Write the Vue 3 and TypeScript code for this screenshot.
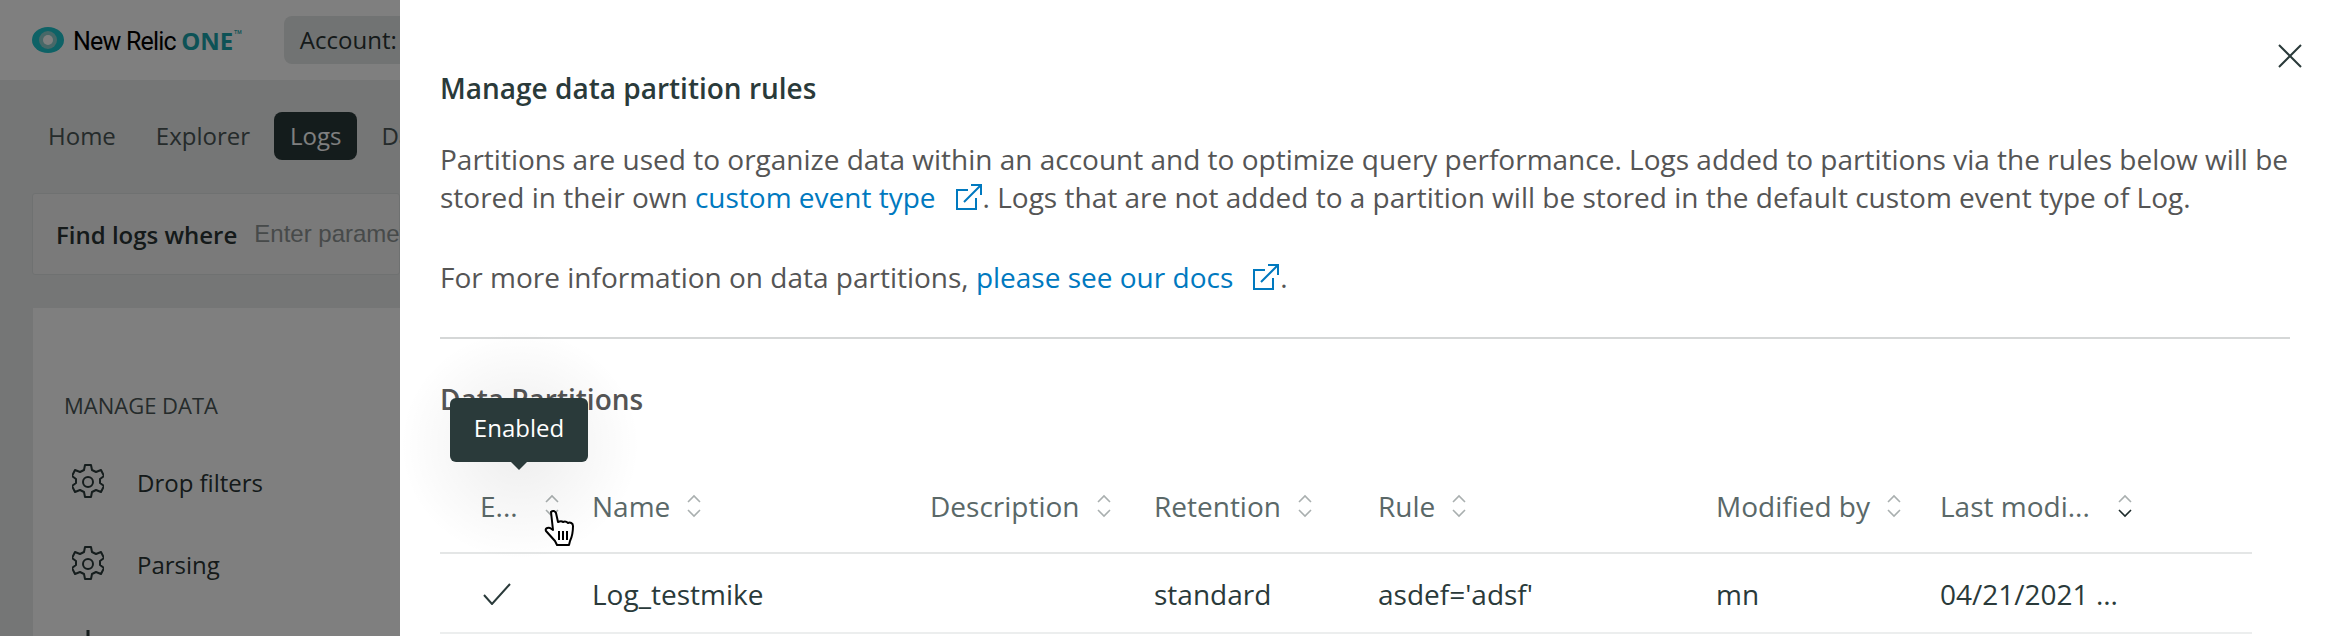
<template>
  <div class="screen">
    <div class="page">
      <header class="topbar">
        <svg class="logo" viewBox="0 0 32 26" width="32" height="26">
          <ellipse cx="16" cy="13" rx="16" ry="13" fill="#1cc4cc" />
          <circle cx="16" cy="13" r="9" fill="#8fd0d0" />
          <circle cx="16" cy="13" r="5" fill="#ffffff" />
        </svg>
        <span class="brand">New Relic <b>ONE</b><sup>™</sup></span>
        <div class="account">Account: Log testing</div>
      </header>
      <nav class="tabs">
        <span class="tab">Home</span>
        <span class="tab">Explorer</span>
        <span class="tab active">Logs</span>
        <span class="tab">Dashboards</span>
      </nav>
      <div class="find">
        <strong>Find logs where</strong>
        <span class="placeholder">Enter parameters here</span>
      </div>
      <section class="side">
        <h4>MANAGE DATA</h4>
        <div v-for="item in sideItems" :key="item.label" class="side-item">
          <svg viewBox="0 0 32 36" width="32" height="36" fill="none" stroke="#2b3a3a" stroke-width="2" stroke-linejoin="round">
            <template v-if="item.gear">
              <path d="M13 1h6l1 5 4 2 5-2 3 6-4 3v4l4 3-3 6-5-2-4 2-1 5h-6l-1-5-4-2-5 2-3-6 4-3v-4l-4-3 3-6 5 2 4-2z" />
              <circle cx="16" cy="18" r="5" />
            </template>
            <path v-else d="M16 2v6M4 14h24v20H4z" stroke-width="3" />
          </svg>
          <span>{{ item.label }}</span>
        </div>
      </section>
      <div class="dim"></div>
    </div>

    <aside class="drawer">
      <svg class="close" viewBox="0 0 24 24" width="24" height="24" stroke="#2a3a3a" stroke-width="2">
        <path d="M1 1l22 22M23 1L1 23" />
      </svg>
      <h3 class="title">Manage data partition rules</h3>
      <p class="intro">
        Partitions are used to organize data within an account and to optimize query performance. Logs added to partitions via the rules below will be stored in their own <a>custom event type<svg class="ext" viewBox="0 0 28 28" width="28" height="28" fill="none" stroke="#0079bf" stroke-width="2"><path d="M13 7H2v19h19V15M9 19L26 2M16 2h10v10" /></svg></a>. Logs that are not added to a partition will be stored in the default custom event type of Log.
      </p>
      <p class="intro">
        For more information on data partitions, <a>please see our docs<svg class="ext" viewBox="0 0 28 28" width="28" height="28" fill="none" stroke="#0079bf" stroke-width="2"><path d="M13 7H2v19h19V15M9 19L26 2M16 2h10v10" /></svg></a>.
      </p>
      <hr class="rule" />
      <h3 class="subtitle">Data Partitions</h3>

      <div class="table">
        <div class="row head">
          <div v-for="col in columns" :key="col.label" class="cell">
            <span>{{ col.label }}</span>
            <svg class="sort" viewBox="0 0 14 24" width="14" height="24" fill="none" stroke-width="1.6">
              <path d="M1 8l6-6 6 6" stroke="#a9afaf" />
              <path d="M1 16l6 6 6-6" :stroke="col.sorted ? '#1d2a2a' : '#a9afaf'" />
            </svg>
          </div>
        </div>
        <div class="row body">
          <div class="cell">
            <svg class="check" viewBox="0 0 28 22" width="28" height="22" fill="none" stroke="#2a3a3a" stroke-width="2"><path d="M1 12l8 9L27 1" /></svg>
          </div>
          <div class="cell">Log_testmike</div>
          <div class="cell"></div>
          <div class="cell">standard</div>
          <div class="cell">asdef='adsf'</div>
          <div class="cell">mn</div>
          <div class="cell">04/21/2021 ...</div>
        </div>
      </div>

      <div class="halo"></div>
      <div class="tooltip">Enabled</div>
      <svg class="hand" viewBox="0 0 32 38" width="32" height="38">
        <path d="M7 3c2-2 4-1 5 1l2 9c2-1 4-1 5 0 2-1 4 0 5 1 2-1 5 0 5 3 0 6-1 11-3 15l-1 4H13l-2-4-9-10c-1-2 1-4 4-3l3 2z" fill="#fff" stroke="#000" stroke-width="2" stroke-linejoin="round" />
        <path d="M15 22v9M19 22v9M23 22v9" stroke="#000" stroke-width="2" />
      </svg>
    </aside>
  </div>
</template>

<script setup lang="ts">
const sideItems = [
  { label: 'Drop filters', gear: true },
  { label: 'Parsing', gear: true },
  { label: 'Data partitions', gear: false }
]

const columns = [
  { label: 'E...', sorted: false },
  { label: 'Name', sorted: false },
  { label: 'Description', sorted: false },
  { label: 'Retention', sorted: false },
  { label: 'Rule', sorted: false },
  { label: 'Modified by', sorted: false },
  { label: 'Last modi...', sorted: true }
]
</script>

<style>
html,
body {
  margin: 0;
  overflow: hidden;
}
</style>

<style scoped>
.screen {
  display: flex;
  width: 2330px;
  height: 636px;
  overflow: hidden;
  font-family: 'Open Sans', 'Noto Sans', sans-serif;
  font-size: 28px;
  color: #2a3434;
}

/* page behind the drawer */
.page {
  position: relative;
  flex: 0 0 400px;
  overflow: hidden;
  background: #eaecec;
  font-size: 24px;
  white-space: nowrap;
}

.dim {
  position: absolute;
  inset: 0;
  background: rgba(0, 0, 0, 0.5);
}

.topbar {
  display: flex;
  align-items: center;
  height: 80px;
  padding-left: 32px;
  background: #fff;
}

.logo,
.brand,
.account {
  flex: none;
}

.brand {
  margin-left: 9px;
  font-family: 'Roboto', 'Liberation Sans', sans-serif;
  font-size: 25px;
  letter-spacing: -0.8px;
  color: #000;
}

.brand b {
  font-family: 'Open Sans', sans-serif;
  font-size: 24px;
  letter-spacing: 0;
  color: #1aa4ac;
  font-weight: 700;
}

.brand sup {
  font-size: 15px;
  line-height: 0;
  color: #1aa4ac;
}

.account {
  margin-left: 42px;
  padding: 8px 16px;
  line-height: 32px;
  background: #e3e6e6;
  border-radius: 8px;
}

.tabs {
  display: flex;
  gap: 8px;
  align-items: center;
  padding: 32px 0 0 32px;
}

.tab {
  padding: 0 16px;
  line-height: 48px;
  color: #4a5656;
}

.tab.active {
  background: #293838;
  color: #fff;
  border-radius: 8px;
}

.find {
  display: flex;
  gap: 17px;
  align-items: center;
  height: 80px;
  margin: 33px 0 0 32px;
  padding-left: 23px;
  background: #f4f5f5;
  border: 1px solid #dfe2e2;
  border-radius: 3px;
}

.find strong {
  font-weight: 600;
}

.placeholder {
  font-family: 'Liberation Sans', sans-serif;
  color: #8e9494;
}

.side {
  margin: 33px 0 0 33px;
  padding: 84px 0 0 31px;
  height: 400px;
  background: #fff;
}

.side h4 {
  margin: 0 0 23px;
  font-size: 22px;
  font-weight: 400;
  line-height: 26px;
  color: #4a5656;
}

.side-item {
  display: flex;
  align-items: center;
  gap: 33px;
  height: 82px;
  padding-left: 8px;
}

/* drawer */
.drawer {
  position: relative;
  flex: 1;
  background: #fff;
  padding: 0 40px 0 40px;
  color: #555;
}

.close {
  position: absolute;
  top: 44px;
  right: 28px;
}

.title {
  margin: 68px 0 0;
  font-size: 28px;
  line-height: 40px;
  font-weight: 600;
  color: #2a3a3a;
}

.intro {
  margin: 32px 0 0;
  font-size: 28px;
  line-height: 38px;
}

.intro + .intro {
  margin-top: 42px;
}

.intro a {
  color: #0079bf;
}

.ext {
  margin-left: 19px;
  vertical-align: -3px;
}

.rule {
  margin: 41px 0 0;
  border: 0;
  border-top: 2px solid #d5d7d7;
}

.subtitle {
  margin: 41px 0 0;
  font-size: 28px;
  line-height: 38px;
  font-weight: 600;
  color: #555;
}

.table {
  width: 1812px;
  margin-top: 42px;
}

.row {
  display: grid;
  grid-template-columns: 112px 338px 224px 224px 338px 224px 352px;
  align-items: center;
}

.row.head {
  height: 92px;
  border-bottom: 2px solid #e4e6e6;
  color: #5a6868;
}

.row.body {
  box-sizing: border-box;
  height: 80px;
  padding-top: 2px;
  border-bottom: 2px solid #eceeee;
  color: #2a3a3a;
}

.cell {
  display: flex;
  align-items: center;
  gap: 17px;
  padding-left: 40px;
  white-space: nowrap;
}

.head .cell:first-child {
  gap: 27px;
}

.head .cell:last-child {
  gap: 28px;
}

.sort {
  flex: none;
}

.check {
  margin-left: 3px;
}

/* tooltip and cursor sit on top of the table */
.halo {
  position: absolute;
  left: 0;
  top: 330px;
  width: 240px;
  height: 230px;
  background: radial-gradient(closest-side, rgba(0, 0, 0, 0.07), rgba(0, 0, 0, 0));
}

.tooltip {
  position: absolute;
  left: 50px;
  top: 398px;
  width: 138px;
  height: 64px;
  line-height: 60px;
  text-align: center;
  font-size: 24px;
  color: #fff;
  background: #2a3a3a;
  border-radius: 6px;
}

.tooltip::after {
  content: '';
  position: absolute;
  left: 60px;
  bottom: -8px;
  border: 9px solid transparent;
  border-bottom: 0;
  border-top-color: #2a3a3a;
}

.hand {
  position: absolute;
  left: 144px;
  top: 509px;
}
</style>
